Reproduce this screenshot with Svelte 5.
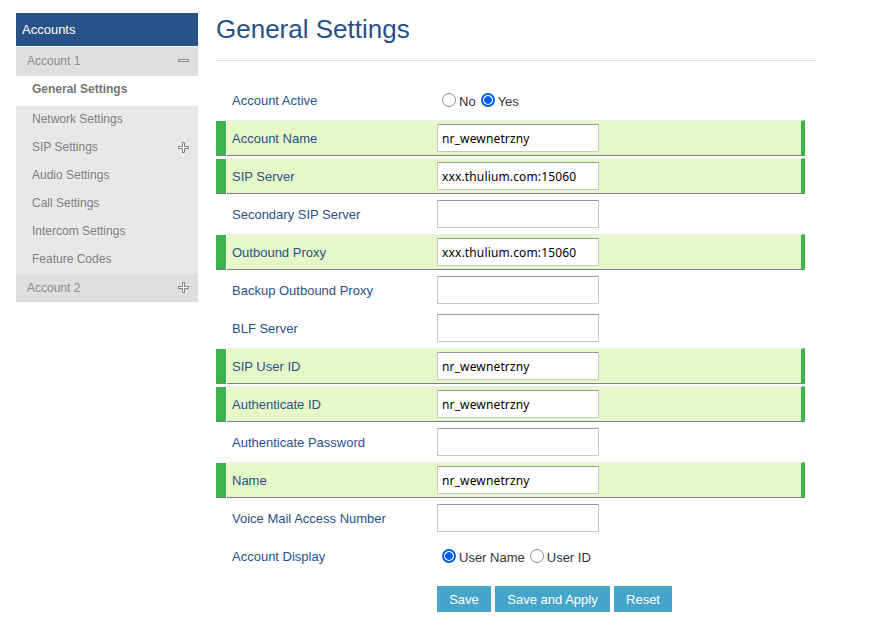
<script lang="ts">
	interface MenuItem {
		label: string;
		icon?: 'plus' | 'minus';
		kind?: 'account' | 'active';
	}

	interface Field {
		label: string;
		value: string;
		required?: boolean;
	}

	const menu: MenuItem[] = [
		{ label: 'Account 1', icon: 'minus', kind: 'account' },
		{ label: 'General Settings', kind: 'active' },
		{ label: 'Network Settings' },
		{ label: 'SIP Settings', icon: 'plus' },
		{ label: 'Audio Settings' },
		{ label: 'Call Settings' },
		{ label: 'Intercom Settings' },
		{ label: 'Feature Codes' },
		{ label: 'Account 2', icon: 'plus', kind: 'account' }
	];

	let fields: Field[] = $state([
		{ label: 'Account Name', value: 'nr_wewnetrzny', required: true },
		{ label: 'SIP Server', value: 'xxx.thulium.com:15060', required: true },
		{ label: 'Secondary SIP Server', value: '' },
		{ label: 'Outbound Proxy', value: 'xxx.thulium.com:15060', required: true },
		{ label: 'Backup Outbound Proxy', value: '' },
		{ label: 'BLF Server', value: '' },
		{ label: 'SIP User ID', value: 'nr_wewnetrzny', required: true },
		{ label: 'Authenticate ID', value: 'nr_wewnetrzny', required: true },
		{ label: 'Authenticate Password', value: '' },
		{ label: 'Name', value: 'nr_wewnetrzny', required: true },
		{ label: 'Voice Mail Access Number', value: '' }
	]);

	let active = $state('Yes');
	let display = $state('User Name');
</script>

<div class="page">
	<nav class="sidebar">
		<div class="menu-title">Accounts</div>
		{#each menu as item}
			<div class="menu-item {item.kind ?? ''}">
				<span>{item.label}</span>
				{#if item.icon}
					<svg width="11" height="11" viewBox="0 0 11 11" fill="#fff" stroke="#808080">
						{#if item.icon === 'plus'}
							<path d="M4.5 .5H6.5V4.5H10.5V6.5H6.5V10.5H4.5V6.5H.5V4.5H4.5Z" />
						{:else}
							<path d="M.5 3.5H10.5V5.5H.5Z" />
						{/if}
					</svg>
				{/if}
			</div>
		{/each}
	</nav>

	<main class="content">
		<h1>General Settings</h1>

		<form class="rows" onsubmit={(e) => e.preventDefault()}>
			<div class="row">
				<span class="bar"></span>
				<div class="cell">
					<span class="label">Account Active</span>
					<div class="radios">
						{#each ['No', 'Yes'] as option}
							<label><input type="radio" name="active" value={option} bind:group={active} />{option}</label>
						{/each}
					</div>
				</div>
			</div>

			{#each fields as field, i}
				<div class="row" class:required={field.required}>
					<span class="bar"></span>
					<div class="cell">
						<label class="label" for="field-{i}">{field.label}</label>
						<input class="text" id="field-{i}" type="text" spellcheck="false" bind:value={field.value} />
					</div>
				</div>
			{/each}

			<div class="row">
				<span class="bar"></span>
				<div class="cell">
					<span class="label">Account Display</span>
					<div class="radios">
						{#each ['User Name', 'User ID'] as option}
							<label><input type="radio" name="display" value={option} bind:group={display} />{option}</label>
						{/each}
					</div>
				</div>
			</div>

			<div class="buttons">
				<button class="save">Save</button>
				<button class="apply">Save and Apply</button>
				<button class="reset">Reset</button>
			</div>
		</form>
	</main>
</div>

<style>
	:global(body) {
		background: #fff;
	}

	.page {
		display: flex;
		align-items: flex-start;
		gap: 18px;
		padding: 13px 16px 0;
		font-family: 'Liberation Sans', Arial, sans-serif;
		font-size: 13px;
	}

	.sidebar {
		width: 182px;
		flex: none;
		font-size: 12px;
	}

	.menu-title {
		height: 33px;
		line-height: 33px;
		padding-left: 6px;
		margin-bottom: 1px;
		background: #285287;
		color: #fff;
		font-size: 13px;
	}

	.menu-item {
		display: flex;
		justify-content: space-between;
		align-items: center;
		box-sizing: border-box;
		height: 28px;
		padding: 0 9px 2px 16px;
		background: #e8e8e8;
		color: #808080;
	}

	.menu-item.account {
		padding-left: 11px;
		padding-bottom: 1px;
		background: #dfdfdf;
		color: #8c8c8c;
	}

	.menu-item.account:nth-child(2) {
		height: 29px;
	}

	.menu-item.active {
		height: 30px;
		padding-bottom: 4px;
		background: #fff;
		color: #757575;
		font-weight: bold;
	}

	.content {
		width: 600px;
		flex: none;
	}

	h1 {
		box-sizing: border-box;
		height: 48px;
		margin: 0 0 21px;
		border-bottom: 1px solid #e0e0e0;
		color: #285287;
		font-size: 26px;
		font-weight: normal;
		line-height: 33px;
	}

	.rows {
		display: flex;
		flex-direction: column;
		gap: 2px;
		width: 589px;
	}

	.row {
		display: flex;
		height: 36px;
	}

	.bar {
		width: 10px;
		margin-right: 1px;
		box-sizing: border-box;
	}

	.cell {
		display: flex;
		flex: 1;
		align-items: center;
		box-sizing: border-box;
		border: solid transparent;
		border-width: 1px 4px 1px 0;
		padding-left: 5px;
	}

	.required .bar {
		margin-top: 1px;
		border-bottom: 1px solid #7f7f7f;
		background: #3bb54a;
	}

	.required .cell {
		background: #e7f8c8;
		border-color: #eee #3bb54a #7f7f7f;
	}

	.label {
		width: 205px;
		color: #285287;
	}

	.text {
		box-sizing: border-box;
		width: 162px;
		height: 28px;
		margin: 0;
		padding: 0 4px;
		border: 1px solid #c8c8cc;
		border-top-color: #999;
		border-radius: 0;
		outline: none;
		background: #fff;
		color: #000;
		font-family: 'Noto Sans', sans-serif;
		font-size: 12px;
		letter-spacing: 0.14px;
	}

	.radios {
		display: flex;
		gap: 5px;
		padding-left: 5px;
		color: #333;
	}

	.radios label {
		display: flex;
		align-items: center;
		gap: 3px;
		line-height: 16px;
		padding-top: 4px;
	}

	.radios input {
		appearance: none;
		box-sizing: border-box;
		width: 14px;
		height: 14px;
		margin: -4px 0 0;
		border: 1px solid #8f8f9d;
		border-radius: 50%;
		background: #fff;
	}

	.radios input:checked {
		border: 2px solid #0060df;
		background: radial-gradient(circle, #0060df 3.5px, #fff 4.1px);
	}

	.buttons {
		display: flex;
		gap: 4px;
		padding: 10px 0 0 221px;
	}

	button {
		height: 26px;
		padding: 1px 0 0;
		border: 0;
		background: #46a6c9;
		color: #fff;
		font-family: inherit;
		font-size: 13px;
		line-height: 25px;
	}

	.save {
		width: 54px;
	}

	.apply {
		width: 115px;
	}

	.reset {
		width: 58px;
	}
</style>
